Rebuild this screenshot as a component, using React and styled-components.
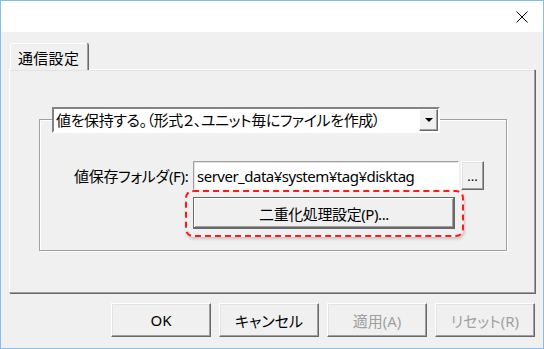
import React from 'react';
import styled, { createGlobalStyle } from 'styled-components';

const GlobalStyle = createGlobalStyle`
  * { box-sizing: border-box; }
  html, body { margin: 0; padding: 0; background: #ffffff; }
  body {
    font-family: "Noto Sans", "Noto Sans CJK JP", sans-serif;
    font-size: 15px;
    color: #000;
  }
`;

const Window = styled.div`
  width: 544px;
  height: 349px;
  border: 1px solid #86bdf1;
  display: flex;
  flex-direction: column;
  background: #f0f0f0;
`;

const TitleBar = styled.div`
  height: 31px;
  background: #ffffff;
  display: flex;
  align-items: center;
  justify-content: flex-end;
  padding-right: 15px;
`;

const Body = styled.div`
  flex: 1;
  display: flex;
  flex-direction: column;
  padding: 11px 8px 10px 8px;
`;

const TabStrip = styled.div`
  display: flex;
  padding-left: 1px;
  position: relative;
  z-index: 1;
  margin-bottom: -1px;
`;

const Tab = styled.div`
  height: 27px;
  padding: 0 8px 0 7px;
  display: flex;
  align-items: center;
  background: #f0f0f0;
  border-top: 1px solid #ffffff;
  border-left: 1px solid #ffffff;
  border-right: 1px solid #a0a0a0;
  box-shadow: 1px 0 0 #696969;
  border-top-left-radius: 2px;
  border-top-right-radius: 2px;
  font-feature-settings: "palt";
  letter-spacing: 0.3px;
`;

const Panel = styled.div`
  height: 224px;
  border: 1px solid;
  border-color: #ffffff #a0a0a0 #a0a0a0 #ffffff;
  box-shadow: 1px 1px 0 #696969, inset 0 1px 0 #e3e3e3;
  padding: 49px 27px 0 29px;
`;

const GroupBox = styled.div`
  height: 132px;
  border: 1px solid #a0a0a0;
  box-shadow: inset 1px 1px 0 #ffffff, 1px 1px 0 #ffffff;
  padding-left: 12px;
  display: flex;
  flex-direction: column;
  align-items: flex-start;
`;

const Combo = styled.div`
  margin-top: -13px;
  width: 388px;
  height: 26px;
  background: #ffffff;
  border: 2px solid;
  border-color: #838383 #ffffff #ffffff #838383;
  display: flex;
  align-items: center;
  justify-content: space-between;
`;

const ComboText = styled.span`
  padding-left: 2px;
  white-space: nowrap;
  font-feature-settings: "palt";
  letter-spacing: -0.4px;
  line-height: 22px;
`;

const DropButton = styled.div`
  width: 19px;
  height: 22px;
  background: #f0f0f0;
  border: 1px solid;
  border-color: #ffffff #696969 #696969 #ffffff;
  box-shadow: inset -1px -1px 0 #a0a0a0;
  display: flex;
  align-items: center;
  justify-content: center;
`;

const FieldRow = styled.div`
  margin-top: 28px;
  padding-left: 22px;
  display: flex;
  align-items: center;
`;

const Label = styled.span`
  width: 119px;
  white-space: nowrap;
  font-feature-settings: "palt";
  letter-spacing: -0.3px;
`;

const TextInput = styled.div`
  width: 266px;
  height: 29px;
  background: #ffffff;
  border: 1px solid;
  border-color: #a0a0a0 #ffffff #ffffff #a0a0a0;
  box-shadow: inset 1px 1px 0 #e3e3e3;
  padding-left: 3px;
  display: flex;
  align-items: center;
  white-space: nowrap;
  letter-spacing: -0.5px;
`;

const Button = styled.div`
  width: ${p => p.$w || 100}px;
  height: ${p => p.$h || 34}px;
  background: #f0f0f0;
  border: 1px solid;
  border-color: #ffffff #696969 #696969 #ffffff;
  box-shadow: inset -1px -1px 0 #a0a0a0, inset 1px 1px 0 #e3e3e3;
  display: flex;
  align-items: center;
  justify-content: center;
  white-space: nowrap;
  font-feature-settings: "palt";
  color: ${p => (p.$disabled ? '#a0a0a0' : '#000')};
`;

const SmallButton = styled(Button)`
  margin-left: 2px;
  align-items: flex-end;
  padding-bottom: 6px;
  font-size: 13px;
  line-height: 13px;
`;

const DefaultButton = styled(Button)`
  position: relative;
  margin-top: 7px;
  margin-left: 141px;
  border: 1px solid #696969;
  box-shadow: inset -1px -1px 0 #696969, inset 1px 1px 0 #ffffff,
    inset -2px -2px 0 #a0a0a0;
  letter-spacing: -0.4px;

  &::after {
    content: '';
    position: absolute;
    left: -9px;
    top: -8px;
    right: -10px;
    bottom: -9px;
    border: 2px dashed #ff1a1a;
    border-radius: 8px;
    box-shadow: 1px 2px 3px rgba(0, 0, 0, 0.18);
  }
`;

const ButtonRow = styled.div`
  margin-top: 10px;
  display: flex;
  justify-content: flex-end;
  gap: 8px;
`;

const CloseIcon = () => (
  <svg width="12" height="12" viewBox="0 0 12 12">
    <path d="M0.5 0.5 L11.5 11.5 M11.5 0.5 L0.5 11.5" stroke="#000" strokeWidth="1" fill="none" />
  </svg>
);

const DownTriangle = () => (
  <svg width="8" height="4" viewBox="0 0 8 4">
    <path d="M0 0 H8 L4 4 Z" fill="#000" />
  </svg>
);

export default function App() {
  return (
    <>
      <GlobalStyle />
      <Window>
        <TitleBar>
          <CloseIcon />
        </TitleBar>
        <Body>
          <TabStrip>
            <Tab>通信設定</Tab>
          </TabStrip>
          <Panel>
            <GroupBox>
              <Combo>
                <ComboText>値を保持する。（形式２、ユニット毎にファイルを作成）</ComboText>
                <DropButton>
                  <DownTriangle />
                </DropButton>
              </Combo>
              <FieldRow>
                <Label>値保存フォルダ(F):</Label>
                <TextInput>server_data¥system¥tag¥disktag</TextInput>
                <SmallButton $w={23} $h={29}>...</SmallButton>
              </FieldRow>
              <DefaultButton $w={262} $h={32}>二重化処理設定(P)...</DefaultButton>
            </GroupBox>
          </Panel>
          <ButtonRow>
            <Button>OK</Button>
            <Button>キャンセル</Button>
            <Button $disabled>適用(A)</Button>
            <Button $disabled>リセット(R)</Button>
          </ButtonRow>
        </Body>
      </Window>
    </>
  );
}
